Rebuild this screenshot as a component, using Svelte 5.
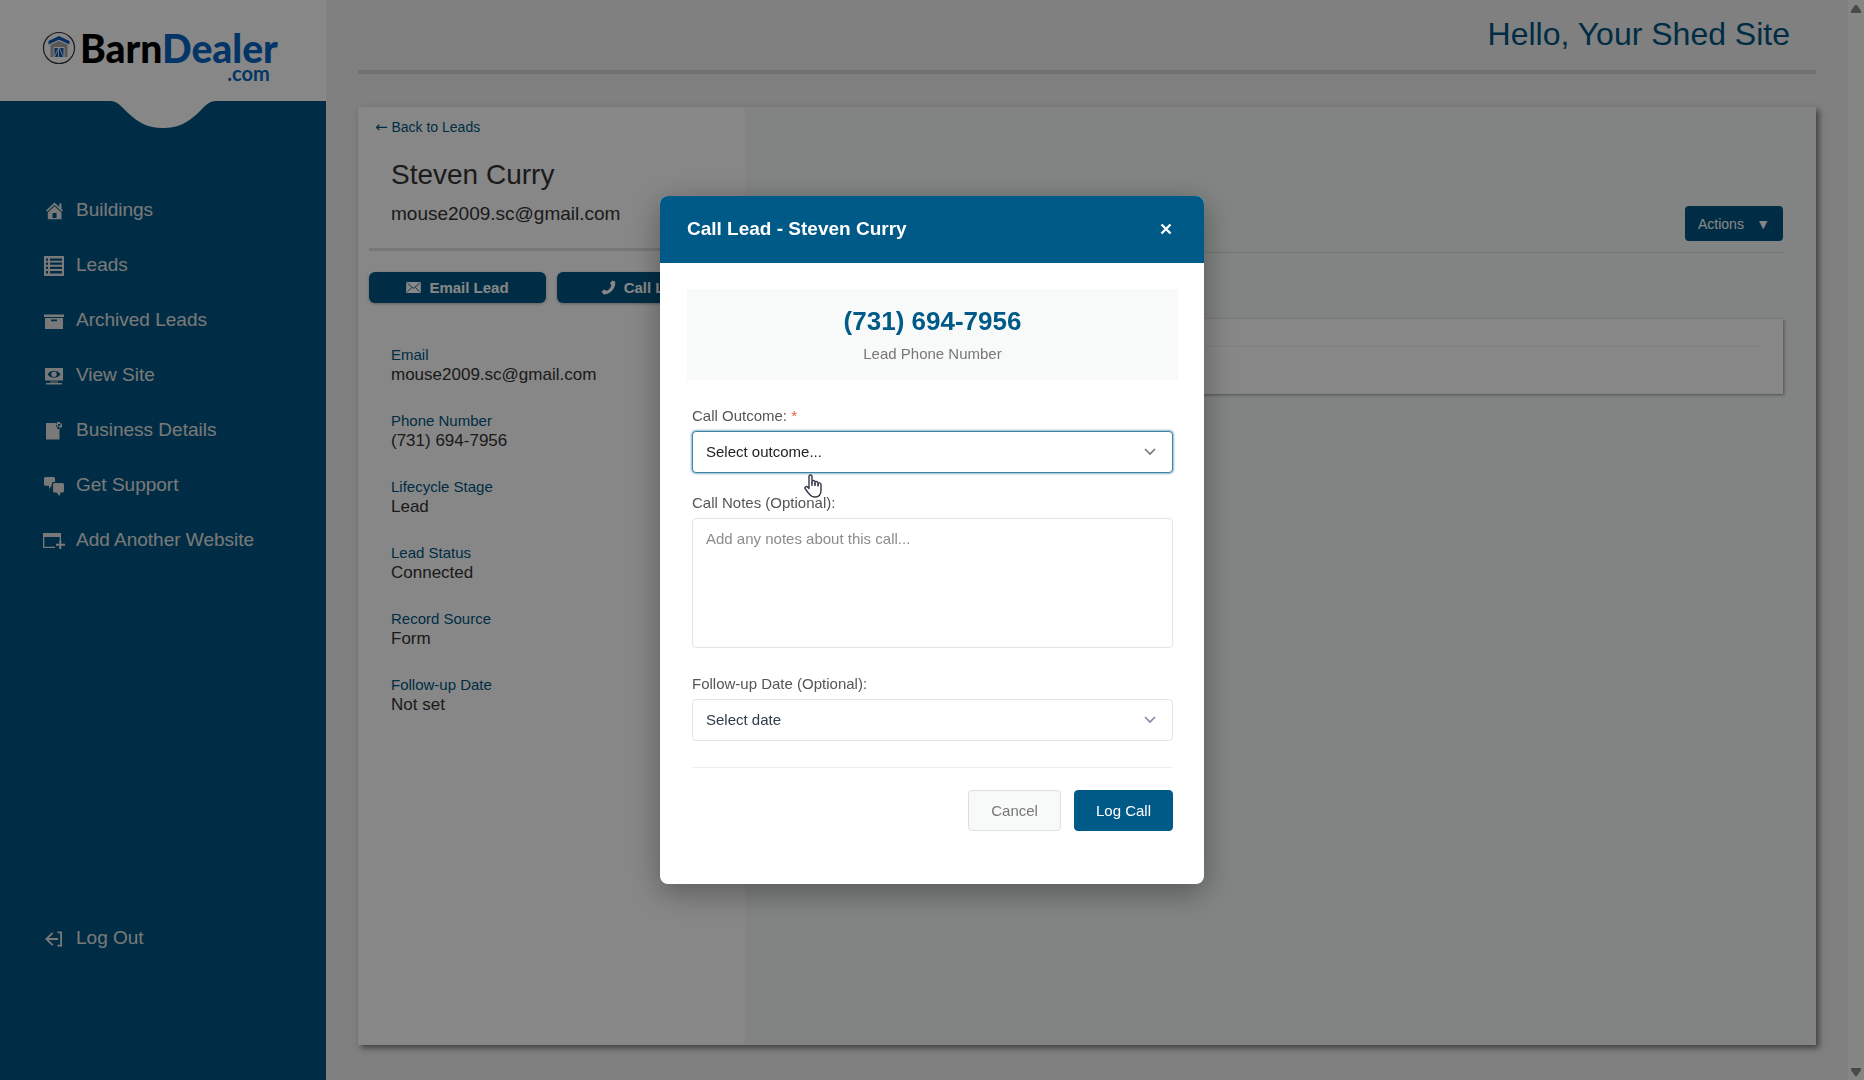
<script>
  const navItems = [
    { label: 'Buildings', icon: 'home' },
    { label: 'Leads', icon: 'list' },
    { label: 'Archived Leads', icon: 'archive' },
    { label: 'View Site', icon: 'view' },
    { label: 'Business Details', icon: 'details' },
    { label: 'Get Support', icon: 'support' },
    { label: 'Add Another Website', icon: 'add' },
  ]

  const details = [
    { label: 'Email', value: 'mouse2009.sc@gmail.com' },
    { label: 'Phone Number', value: '(731) 694-7956' },
    { label: 'Lifecycle Stage', value: 'Lead' },
    { label: 'Lead Status', value: 'Connected' },
    { label: 'Record Source', value: 'Form' },
    { label: 'Follow-up Date', value: 'Not set' },
  ]

  let outcome = $state('')
  let notes = $state('')
  let followUp = $state('')
</script>

{#snippet icon(name)}
  <svg class="icon" viewBox="0 0 20 20" width="20" height="20" fill="currentColor" aria-hidden="true">
    {#if name === 'home'}
      <path d="M10.500 1.500 2 9.500l1.100 1.200 7.400-6.800 7.400 6.800L19 9.500l-1.500-1.400V2.500h-2.300v3.400z" />
      <path fill-rule="evenodd" d="M10.500 5.200 3.800 11.400V18.200h13.700v-6.800zM8.500 12h4v5h-4z" />
    {:else if name === 'list'}
      <path fill-rule="evenodd" d="M0 0h20v20H0zM2 2.500v2.200h2V2.500zm4 0v2.200h12V2.500zM2 6.600v2.200h2V6.600zm4 0v2.200h12V6.600zM2 10.800V13h2v-2.200zm4 0V13h12v-2.200zM2 15v2.400h2V15zm4 0v2.400h12V15z" />
    {:else if name === 'archive'}
      <path d="M0 3.500h20V6H0z" />
      <path fill-rule="evenodd" d="M1 7h18v11H1zM7 8.600v1.600h6V8.600z" />
    {:else if name === 'view'}
      <path fill-rule="evenodd" d="M1 2h18v12.500H1zM3.500 8.200C6.500 13 13.500 13 16.500 8.200 13.500 3.600 6.500 3.600 3.500 8.200zM10 5.600a2.700 2.700 0 1 1 0 5.400 2.700 2.700 0 0 1 0-5.400z" />
      <path d="M6 15.500h8v1H6zM2 17h16v1.500H2z" />
    {:else if name === 'details'}
      <path d="M2 2h10v3.500h1.300V8H15.500V18.500H2z" />
      <path fill-rule="evenodd" d="M13 1h3v1.500h2v3L15.500 8V5.500H13V4h-1.300V2.500H13zM14 3v1.500h2.500V3z" />
    {:else if name === 'support'}
      <path d="M1.500 1h8A1.500 1.500 0 0 1 11 2.500V6H9.500A1.800 1.800 0 0 0 7.800 8v1.500L5 13V9.800H1.500A1.500 1.500 0 0 1 0 8.300V2.500A1.500 1.500 0 0 1 1.500 1z" />
      <path d="M10.500 7h8A1.500 1.500 0 0 1 20 8.500V15a1.500 1.500 0 0 1-1.500 1.500H16.500L15.500 20l-3-3.500h-2A1.500 1.500 0 0 1 9 15V8.500A1.500 1.500 0 0 1 10.500 7z" />
    {:else if name === 'add'}
      <path fill-rule="evenodd" d="M-1 2h18v8h-1.300V6H.3v9.700H11V17H-1z" />
      <path d="M15.300 9.500h2v3.300H21v2h-3.700V18h-2v-3.200H12v-2h3.300z" />
    {:else if name === 'logout'}
      <path d="M13.500 2.500H18v15h-4.500v-1.700h2.700V4.200h-2.700z" />
      <path d="M8 3.200 1 10l7 6.800 1.300-1.300L4.800 11H14V9H4.800l4.500-4.500z" />
    {/if}
  </svg>
{/snippet}

{#snippet chevron()}
  <svg class="chevron" viewBox="0 0 12 8" width="12" height="8" fill="none" stroke="currentColor" stroke-width="1.600" aria-hidden="true">
    <path d="m1 1 5 5 5-5" />
  </svg>
{/snippet}

<div class="page">
  <aside class="sidebar">
    <a class="logo" href="#home">
      <svg viewBox="0 0 34 34" width="34" height="34" aria-hidden="true">
        <circle cx="17" cy="17" r="15.500" fill="none" stroke="#333" stroke-width="1.200" />
        <path d="M17 5 6.500 10v3.500L17 8.800l10.500 4.700V10z" fill="#0b5cb8" />
        <path d="M17 10 8.500 13.800V26h3V16h11v10h3V13.800z" fill="#a6a6a6" />
        <path d="M12.500 17h9v9h-9z" fill="#0b5cb8" />
        <path d="M16.500 17v9M17.500 17l4 9M12.500 26l4-9" stroke="#ddd" fill="none" />
      </svg>
      <span class="brand">
        <span class="name">Barn<span class="blue">Dealer</span></span>
        <b class="blue com">.com</b>
      </span>
    </a>
    <svg class="notch" viewBox="0 0 326 28" width="326" height="28" fill="#fff" aria-hidden="true">
      <path d="M110 0C117 0 120 4 128 12C138 21 147 27 163 27C179 27 188 21 198 12C206 4 209 0 216 0Z" />
    </svg>
    <nav>
      {#each navItems as item}
        <a href="#{item.icon}">{@render icon(item.icon)}{item.label}</a>
      {/each}
      <a class="logout" href="#logout">{@render icon('logout')}Log Out</a>
    </nav>
  </aside>

  <main>
    <header>Hello, Your Shed Site</header>
    <div class="card">
      <section class="lead">
        <a class="back" href="#leads"><span>←</span> Back to Leads</a>
        <h1>Steven Curry</h1>
        <p class="mail">mouse2009.sc@gmail.com</p>
        <hr />
        <div class="buttons">
          <button type="button">
            <svg viewBox="0 0 16 12" width="15" height="11" aria-hidden="true">
              <rect width="16" height="12" rx="1" fill="#fff" />
              <path d="m1.500 1.500 6.500 5.500 6.500-5.500M1.500 10.500l4.500-4.500M14.500 10.500 10 6" fill="none" stroke="#005a87" />
            </svg>
            Email Lead
          </button>
          <button type="button">
            <svg viewBox="0 0 16 16" width="15" height="15" fill="#fff" aria-hidden="true">
              <path d="M12 0.500 15 1.500C16.500 8 10 15.500 3 15.500L0.500 12.500 3.500 10 6 11.500C8.500 10.500 10.500 8 11 5.500L9.500 3.500z" />
            </svg>
            Call Lead
          </button>
        </div>
        <dl>
          {#each details as item}
            <div>
              <dt>{item.label}</dt>
              <dd>{item.value}</dd>
            </div>
          {/each}
        </dl>
      </section>
      <section class="activity">
        <div class="toolbar">
          <button type="button">Actions <span>▼</span></button>
        </div>
        <div class="box"><hr /></div>
      </section>
    </div>
  </main>

  <div class="scrollbar">
    <svg viewBox="0 0 10 8" width="10" height="8" aria-hidden="true"><path d="M4 0h2l4 6v2H0V6z" /></svg>
    <svg viewBox="0 0 10 8" width="10" height="8" aria-hidden="true"><path d="M0 0h10v2L6 8H4L0 2z" /></svg>
  </div>
</div>

<div class="overlay">
  <div class="modal" role="dialog" aria-labelledby="modal-title">
    <div class="modal-header">
      <h2 id="modal-title">Call Lead - Steven Curry</h2>
      <button type="button" aria-label="Close">
        <svg viewBox="0 0 12 12" width="12" height="12" stroke="#fff" stroke-width="2.400" aria-hidden="true">
          <path d="m1.500 1.500 9 9m0-9-9 9" />
        </svg>
      </button>
    </div>
    <div class="modal-body">
      <div class="phone">
        <strong>(731) 694-7956</strong>
        <span>Lead Phone Number</span>
      </div>
      <form>
        <div class="field">
          <label for="outcome">Call Outcome: <i>*</i></label>
          <div class="select">
            <select id="outcome" class="active" bind:value={outcome}>
              <option value="">Select outcome...</option>
            </select>
            {@render chevron()}
            <svg class="pointer" viewBox="0 0 18 24" width="18" height="24" fill="#fff" stroke="#333846" stroke-width="1.400" stroke-linejoin="round" aria-hidden="true">
              <path d="M5 14.500V2.500C5 0.500 8 0.500 8 2.500V9 7.500C8 6 11 6 11 8V10 8.500C11 7 14 7 14 9V11 9.800C14 8.400 17 8.600 17 10.500V16C17 20 15 23 11 23C7 23 6 21 4 18.500L1 14.500C0.500 13 2.500 12 3.500 13z" />
              <path d="M8 8v4M11 9v3M14 10v2.500" />
            </svg>
          </div>
        </div>
        <div class="field">
          <label for="notes">Call Notes (Optional):</label>
          <textarea id="notes" placeholder="Add any notes about this call..." bind:value={notes}></textarea>
        </div>
        <div class="field">
          <label for="follow-up">Follow-up Date (Optional):</label>
          <div class="select date">
            <select id="follow-up" bind:value={followUp}>
              <option value="">Select date</option>
            </select>
            {@render chevron()}
          </div>
        </div>
        <div class="modal-footer">
          <button type="button" class="cancel">Cancel</button>
          <button type="button" class="submit">Log Call</button>
        </div>
      </form>
    </div>
  </div>
</div>

<style>
  :global(body) {
    margin: 0;
    font-family: "Liberation Sans", Arial, sans-serif;
    font-size: 15px;
    line-height: 20px;
  }

  * {
    box-sizing: border-box;
  }

  a {
    text-decoration: none;
  }

  button,
  select,
  textarea {
    font: inherit;
  }

  svg {
    flex: none;
  }

  .page {
    display: flex;
    min-height: 100vh;
    background-color: #f1f1f1;
  }

  .sidebar {
    display: flex;
    flex-direction: column;
    flex: 0 0 326px;
    background-color: #005682;
  }

  .logo {
    display: flex;
    align-items: flex-start;
    gap: 4px;
    height: 101px;
    padding: 31px 42px 0;
    background-color: #fff;
    color: #000;
    font-family: Lato, sans-serif;
  }

  .brand {
    display: flex;
    flex-direction: column;
    align-items: flex-end;
  }

  .name {
    font-size: 39px;
    font-weight: 900;
    line-height: 34px;
  }

  .blue {
    color: #0765c0;
  }

  .com {
    padding-right: 8px;
    font-size: 20px;
    line-height: 16px;
  }

  .notch {
    display: block;
  }

  nav {
    display: flex;
    flex: 1;
    flex-direction: column;
    padding: 53px 44px 115px;
  }

  nav a {
    display: flex;
    align-items: center;
    gap: 12px;
    height: 55px;
    color: #e4e4e4;
    font-size: 19px;
  }

  nav .icon {
    overflow: visible;
    margin-top: 2px;
  }

  .logout {
    margin-top: auto;
  }

  main {
    display: flex;
    flex: 1;
    flex-direction: column;
    padding: 0 32px 35px;
  }

  header {
    height: 74px;
    margin-bottom: 33px;
    padding: 14px 26px 0;
    border-bottom: 4px solid #d5d5d5;
    color: #005682;
    font-size: 32px;
    line-height: 40px;
    text-align: right;
  }

  .card {
    display: flex;
    flex: 1;
    background-color: #f4f9f7;
    box-shadow: 3px 3px 6px rgba(0, 0, 0, 0.5);
  }

  .lead {
    flex: 0 0 387px;
    padding: 10px 11px;
    background-color: #fff;
    color: #333;
  }

  .back {
    display: block;
    margin-left: 6px;
    color: #005682;
    font-size: 14px;
  }

  .back span {
    font-family: "DejaVu Sans", sans-serif;
    font-size: 15px;
  }

  h1 {
    margin: 21px 22px 10px;
    font-size: 28px;
    font-weight: normal;
    line-height: 34px;
  }

  .mail {
    margin: 0 22px 22px;
    font-size: 19px;
    line-height: 24px;
  }

  hr {
    margin: 0;
    border: 0;
    border-top: 3px solid #e0e0e0;
  }

  .buttons {
    display: grid;
    grid-template-columns: 1fr 1fr;
    gap: 11px;
    margin: 21px 0 42px;
  }

  .buttons button {
    display: flex;
    align-items: center;
    justify-content: center;
    gap: 8px;
    height: 31px;
    border: 0;
    border-radius: 6px;
    background-color: #005682;
    box-shadow: 0 1px 3px rgba(0, 0, 0, 0.3);
    color: #fff;
    font-weight: bold;
  }

  dl {
    display: grid;
    gap: 26px;
    margin: 0 22px;
  }

  dt {
    color: #005682;
  }

  dd {
    margin: 0;
    font-size: 17px;
  }

  .activity {
    flex: 1;
    padding: 99px 33px 0;
  }

  .toolbar {
    display: flex;
    justify-content: flex-end;
    padding-bottom: 11px;
    border-bottom: 1px solid #dadedc;
  }

  .toolbar button {
    display: flex;
    align-items: center;
    justify-content: space-between;
    width: 98px;
    height: 35px;
    padding: 0 13px;
    border: 0;
    border-radius: 4px;
    background-color: #005682;
    color: #fff;
    font-size: 14px;
  }

  .toolbar span {
    font-size: 14px;
  }

  .box {
    height: 75px;
    margin-top: 66px;
    padding: 27px 22px;
    background-color: #fff;
    box-shadow: 1px 1px 3px rgba(0, 0, 0, 0.4);
  }

  .box hr {
    border-top: 1px solid #f0f0f0;
  }

  .scrollbar {
    display: flex;
    flex: 0 0 16px;
    flex-direction: column;
    align-items: center;
    justify-content: space-between;
    padding: 5px 0 4px;
    background-color: #fcfcfc;
    fill: #8b8b8b;
  }

  .overlay {
    position: fixed;
    inset: 0;
    display: grid;
    place-items: center;
    background-color: rgba(0, 0, 0, 0.47);
  }

  .modal {
    width: 544px;
    overflow: hidden;
    border-radius: 8px;
    background-color: #fff;
    box-shadow: 0 8px 32px rgba(0, 0, 0, 0.35);
  }

  .modal-header {
    display: flex;
    align-items: center;
    justify-content: space-between;
    height: 67px;
    padding: 0 26px 2px 27px;
    background-color: #005a87;
    color: #fff;
  }

  h2 {
    margin: 0;
    font-size: 19px;
  }

  .modal-header button {
    display: flex;
    padding: 6px;
    border: 0;
    background: none;
  }

  .modal-body {
    padding: 26px 26px 53px 27px;
  }

  .phone {
    display: flex;
    flex-direction: column;
    align-items: center;
    gap: 8px;
    padding: 17px 0 16px;
    background-color: #f8faf9;
    color: #777;
  }

  .phone strong {
    color: #005a87;
    font-size: 26px;
    line-height: 30px;
  }

  form {
    padding: 26px 5px 0;
  }

  .field {
    margin-bottom: 20px;
  }

  label {
    display: block;
    margin-bottom: 5px;
    color: #555;
  }

  i {
    color: #f0583c;
    font-style: normal;
  }

  .select {
    position: relative;
    color: #777;
  }

  .date {
    color: #7d8ca3;
  }

  select,
  textarea {
    display: block;
    width: 100%;
    padding: 0 13px;
    border: 1px solid #e2e5e8;
    border-radius: 4px;
    outline: none;
    background-color: #fff;
  }

  select {
    height: 42px;
    appearance: none;
    color: #2f3a4a;
  }

  .active {
    border-color: #3f83a5;
    box-shadow: 0 0 2px 1px rgba(0, 90, 135, 0.45);
    color: #222;
  }

  .chevron {
    position: absolute;
    top: 17px;
    right: 17px;
  }

  .pointer {
    position: absolute;
    top: 43px;
    left: 112px;
  }

  textarea {
    height: 130px;
    margin-bottom: 26px;
    padding-top: 10px;
    resize: none;
  }

  textarea::placeholder {
    color: #8c8c8c;
  }

  .modal-footer {
    display: flex;
    justify-content: flex-end;
    gap: 13px;
    margin-top: 26px;
    padding-top: 22px;
    border-top: 1px solid #eceeef;
  }

  .modal-footer button {
    height: 41px;
    padding: 0 21px;
    border: 1px solid #005a87;
    border-radius: 4px;
  }

  .modal-footer .cancel {
    padding: 0 22px;
    border-color: #dde0e1;
    background-color: #f8faf9;
    color: #777;
  }

  .modal-footer .submit {
    background-color: #005a87;
    color: #fff;
  }
</style>
